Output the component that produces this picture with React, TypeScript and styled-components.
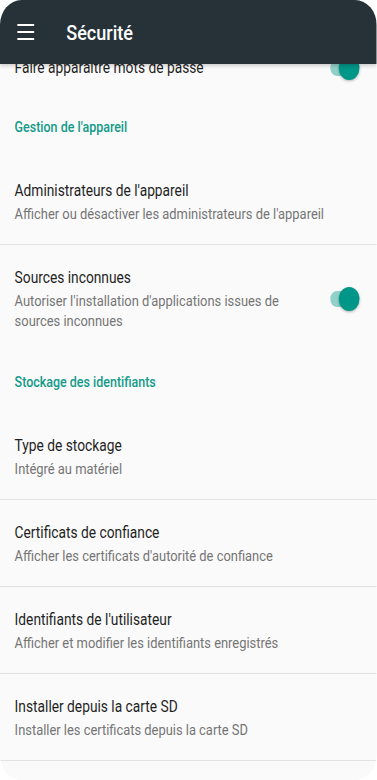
import React from "react";
import styled, { createGlobalStyle } from "styled-components";

const SX = 0.86;
const W = Math.round(377 / SX);

const Global = createGlobalStyle`
  html, body { margin: 0; padding: 0; background: #ffffff; overflow: hidden; }
  body { font-family: Roboto, "Noto Sans", sans-serif; }
  * { box-sizing: border-box; }
`;

/* The device screenshot is horizontally condensed: the screen is laid out at
   its natural width and squeezed to the 377px window. */
const Screen = styled.div`
  position: relative;
  width: ${W}px;
  height: 780px;
  overflow: hidden;
  border-radius: 25px;
  background: #fafafa;
  transform: scaleX(${SX});
  transform-origin: 0 0;
`;

const AppBar = styled.header`
  position: absolute;
  top: 0;
  left: 0;
  right: 0;
  height: 64px;
  z-index: 2;
  display: flex;
  align-items: center;
  gap: 37px;
  padding: 0 0 0 20px;
  background: #263238;
  color: #ffffff;
  box-shadow: 0 2px 4px rgba(0, 0, 0, 0.18);
`;

const Title = styled.h1`
  margin: 2px 0 0;
  font-size: 21px;
  font-weight: 500;
  line-height: 24px;
`;

const List = styled.div`
  display: flex;
  flex-direction: column;
  padding-top: 35px;
`;

const Row = styled.div<{ $divider?: boolean; $pb?: number }>`
  display: flex;
  align-items: center;
  gap: 18px;
  padding: 21px 20px ${(p) => p.$pb ?? 20}px 17px;
  border-bottom: ${(p) => (p.$divider ? "1px solid #e2e2e2" : "none")};
`;

const Texts = styled.div`
  flex: 1;
  min-width: 0;
  display: flex;
  flex-direction: column;
`;

const ItemTitle = styled.div`
  font-size: 16px;
  line-height: 24px;
  color: #1f1f1f;
`;

const ItemSub = styled.div`
  margin-top: 1px;
  font-size: 15px;
  line-height: 20px;
  color: #757575;
`;

const Category = styled.div`
  padding: 22px 17px 20px;
  font-size: 14.5px;
  line-height: 20px;
  font-weight: 500;
  color: #139a89;
`;

const SwitchTrack = styled.div`
  position: relative;
  width: 32px;
  height: 16px;
  margin-right: 2px;
  border-radius: 8px;
  background: #92d1c9;
  flex: none;
`;

const SwitchThumb = styled.div`
  position: absolute;
  right: -2px;
  top: -4px;
  width: 24px;
  height: 24px;
  border-radius: 50%;
  background: #009688;
  box-shadow: 0 1px 3px rgba(0, 0, 0, 0.3);
`;

const Switch = () => (
  <SwitchTrack>
    <SwitchThumb />
  </SwitchTrack>
);

const Menu = () => (
  <svg width="20" height="16" viewBox="0 0 20 16" aria-hidden>
    <rect x="0" y="0" width="20" height="2" fill="#fff" />
    <rect x="0" y="7" width="20" height="2" fill="#fff" />
    <rect x="0" y="14" width="20" height="2" fill="#fff" />
  </svg>
);

type Item = { title: string; sub: string; divider?: boolean };

const gestion: Item[] = [
  { title: "Administrateurs de l'appareil", sub: "Afficher ou désactiver les administrateurs de l'appareil", divider: true },
];

const stockage: Item[] = [
  { title: "Type de stockage", sub: "Intégré au matériel", divider: true },
  { title: "Certificats de confiance", sub: "Afficher les certificats d'autorité de confiance", divider: true },
  { title: "Identifiants de l'utilisateur", sub: "Afficher et modifier les identifiants enregistrés", divider: true },
  { title: "Installer depuis la carte SD", sub: "Installer les certificats depuis la carte SD", divider: true },
];

const ItemRow = ({ item }: { item: Item }) => (
  <Row $divider={item.divider}>
    <Texts>
      <ItemTitle>{item.title}</ItemTitle>
      <ItemSub>{item.sub}</ItemSub>
    </Texts>
  </Row>
);

export default function App() {
  return (
    <>
      <Global />
      <Screen>
        <AppBar>
          <Menu />
          <Title>Sécurité</Title>
        </AppBar>
        <List>
          <Row $pb={16}>
            <Texts>
              <ItemTitle>Faire apparaître mots de passe</ItemTitle>
            </Texts>
            <Switch />
          </Row>
          <Category>Gestion de l'appareil</Category>
          {gestion.map((i) => (
            <ItemRow key={i.title} item={i} />
          ))}
          <Row>
            <Texts>
              <ItemTitle>Sources inconnues</ItemTitle>
              <ItemSub>Autoriser l'installation d'applications issues de sources inconnues</ItemSub>
            </Texts>
            <Switch />
          </Row>
          <Category>Stockage des identifiants</Category>
          {stockage.map((i) => (
            <ItemRow key={i.title} item={i} />
          ))}
        </List>
      </Screen>
    </>
  );
}
